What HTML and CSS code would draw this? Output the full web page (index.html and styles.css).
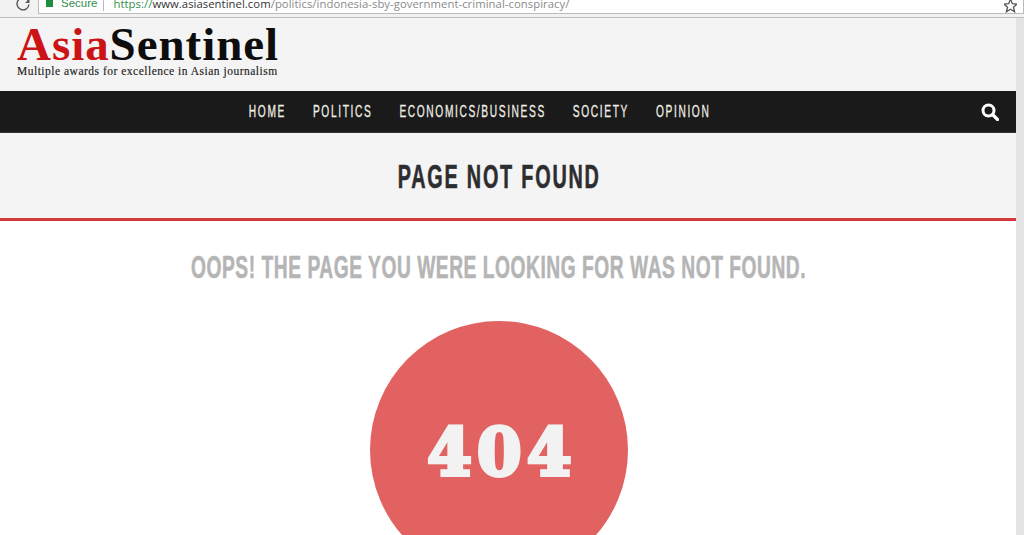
FILE: index.html
```html
<!DOCTYPE html>
<html lang="en">
<head>
<meta charset="utf-8">
<title>Page not found</title>
<link rel="stylesheet" href="styles.css">
</head>
<body>
<div class="chrome">
  <svg class="reload" width="16" height="14" viewBox="0 0 16 14"><path d="M13 1.500a6 6 0 1 0 1 4" transform="translate(0 -1)" fill="none" stroke="#555" stroke-width="1.400"/><path d="M10 3h4.500V-1z" fill="#555"/></svg>
  <div class="omnibox">
    <span class="lock"></span>
    <span class="secure">Secure</span>
    <span class="sep"></span>
    <span class="url"><span class="https">https://</span><span class="host">www.asiasentinel.com</span>/politics/indonesia-sby-government-criminal-conspiracy/</span>
    <svg class="star" width="13" height="13" viewBox="0 0 14 14"><path d="M7 -1l2 5 5 .4-3.800 3.300 1.200 5L7 10l-4.400 2.700 1.200-5L0 4.400 5 4z" fill="none" stroke="#555" stroke-width="1.400"/></svg>
  </div>
</div>
<div class="viewport">
  <div class="page">
    <header class="masthead">
      <div class="logo"><span class="asia">Asia</span>Sentinel</div>
      <div class="tagline">Multiple awards for excellence in Asian journalism</div>
    </header>
    <nav class="nav">
      <ul class="menu">
        <li>HOME</li><li>POLITICS</li><li>ECONOMICS/BUSINESS</li><li>SOCIETY</li><li>OPINION</li>
      </ul>
      <svg class="search" width="18" height="18" viewBox="0 0 18 18"><circle cx="7.500" cy="7.500" r="5.500" fill="none" stroke="#fff" stroke-width="3"/><path d="M11.500 11.500l5 5" stroke="#fff" stroke-width="3.200" stroke-linecap="round"/></svg>
    </nav>
    <section class="title-band"><h1>PAGE NOT FOUND</h1></section>
    <main class="content">
      <h2>OOPS! THE PAGE YOU WERE LOOKING FOR WAS NOT FOUND.</h2>
      <div class="circle"><span>404</span></div>
    </main>
  </div>
  <div class="scrollbar"></div>
</div>
</body>
</html>
```
FILE: styles.css
```css
html, body { margin: 0; padding: 0; height: 535px; overflow: hidden; background: #fff; }
body { font-family: "Liberation Sans", sans-serif; }
.chrome { height: 17px; background: #f2f2f2; border-bottom: 1px solid #bdbdbd; display: flex; align-items: flex-start; }
.reload { margin: 0 0 0 15px; flex: none; }
.omnibox { margin-left: 7px; width: 985px; height: 13px; background: #fff; border: 1px solid #bbb; border-top: 0; display: flex; align-items: center; font-size: 11.500px; line-height: 13px; overflow: hidden; position: relative; color: #8a8a8a; }
.lock { width: 7px; height: 7px; background: #1e8e3e; margin: -7px 0 0 7px; }
.secure { color: #2f8f4e; margin-left: 8px; margin-top: -6px; }
.sep { width: 1px; height: 12px; background: #bbb; margin: -3px 9px 0 6px; }
.url { margin-top: -6px; white-space: nowrap; font-family: "Open Sans", sans-serif; font-size: 11.300px; letter-spacing: .05px; }
.https { color: #2f8f4e; }
.host { color: #333; }
.star { position: absolute; right: 6px; top: 0; }
.viewport { display: flex; height: 517px; }
.page { width: 1016px; flex: none; overflow: hidden; }
.scrollbar { flex: 1; background: #e4e4e4; }
.masthead { height: 73px; background: #f4f4f4; box-sizing: border-box; padding: 6px 0 0 17px; }
.logo { font-family: "Liberation Serif", serif; font-weight: 700; font-size: 47px; line-height: 41px; color: #0d0d0d; letter-spacing: .95px; }
.asia { color: #cc1417; }
.tagline { font-family: "Liberation Serif", serif; font-size: 11.500px; line-height: 13px; color: #222; letter-spacing: .5px; -webkit-text-stroke: .15px #222; }
.nav { height: 42px; background: #1a1a1a; border-bottom: 1px solid #333; box-sizing: border-box; display: flex; align-items: center; justify-content: center; position: relative; }
.menu { list-style: none; display: flex; gap: 45px; margin: 0 57px 0 0; padding: 0; font-size: 17px; letter-spacing: 2.700px; color: #f1efe6; transform: scaleX(.6); white-space: nowrap; flex: none; -webkit-text-stroke: .3px #f1efe6; }
.search { position: absolute; right: 17px; top: 12px; }
.title-band { height: 88px; padding-top: 2px; background: #f4f4f4; border-bottom: 3px solid #d43a3c; box-sizing: border-box; display: flex; align-items: center; justify-content: center; }
.title-band h1 { margin: 0 18px 0 0; font-size: 33px; font-weight: 700; letter-spacing: 3px; color: #2d2d30; transform: scaleX(.6); white-space: nowrap; -webkit-text-stroke: .6px #2d2d30; }
.content { display: flex; flex-direction: column; align-items: center; padding-right: 18px; padding-top: 28px; }
.content h2 { margin: 0; font-size: 32px; line-height: 37px; font-weight: 700; letter-spacing: .9px; color: #b5b5b5; white-space: nowrap; transform: scaleX(.6); flex: none; -webkit-text-stroke: .6px #b5b5b5; }
.circle { margin-top: 35px; width: 258px; height: 258px; border-radius: 50%; background: #e26262; display: flex; align-items: center; justify-content: center; flex: none; }
.circle span { padding: 3px 0 0 7px; font-family: "DejaVu Serif", serif; font-weight: 700; font-size: 66px; color: #f2f2f2; letter-spacing: 5.500px; transform: scaleX(.97); -webkit-text-stroke: 4px #f2f2f2; }
```
